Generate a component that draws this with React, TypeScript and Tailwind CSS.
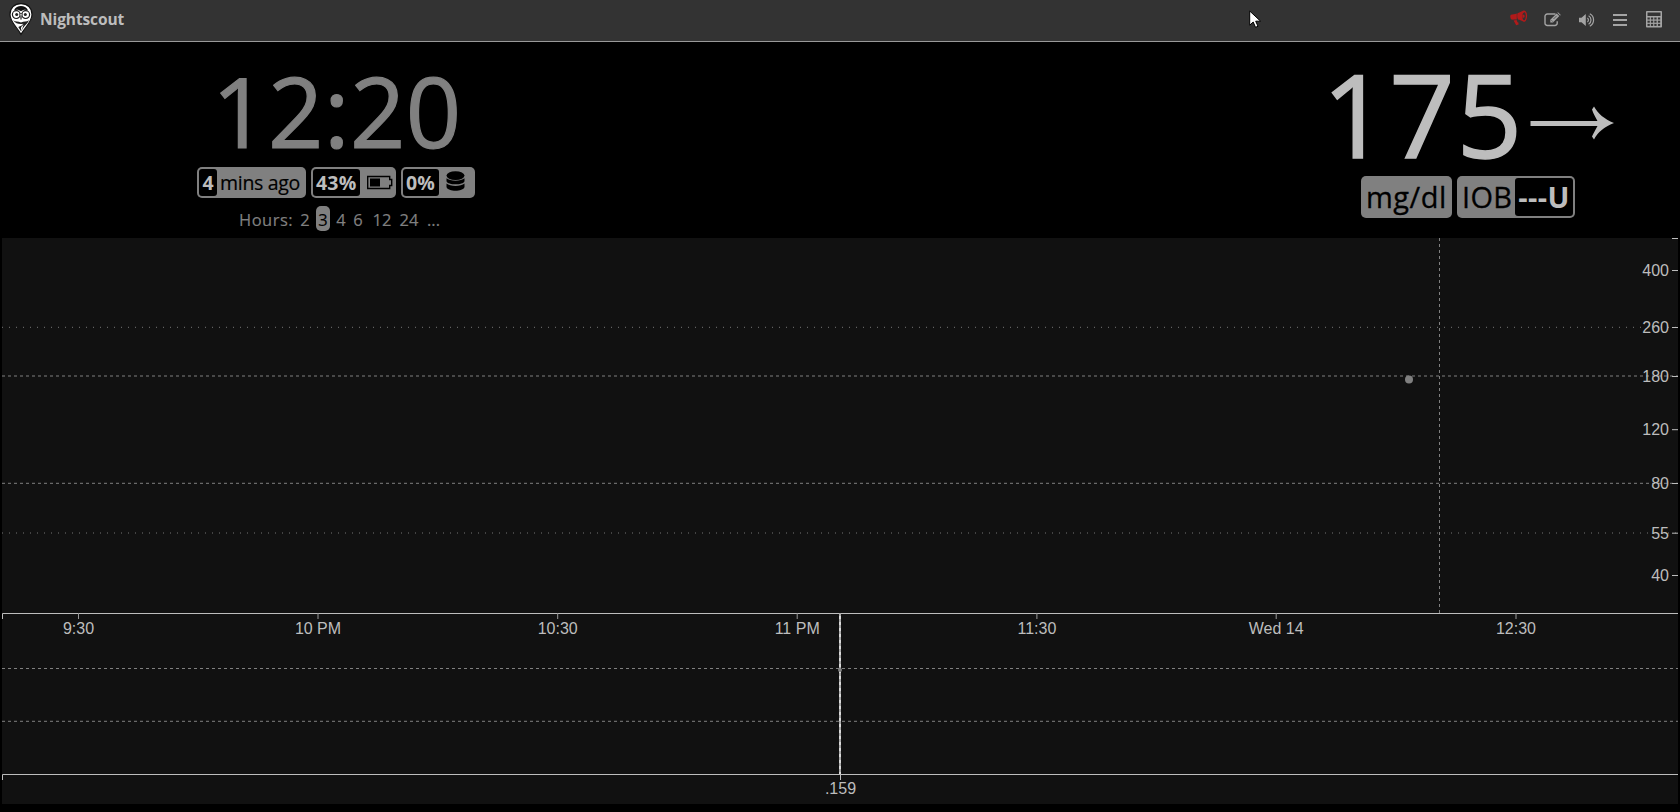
import React from "react";

const WIDTH = 1676;
const HEIGHT = 566;

const yTicks = [
  { label: "400", y: 32.5 },
  { label: "260", y: 89.5 },
  { label: "180", y: 138.5 },
  { label: "120", y: 191.7 },
  { label: "80", y: 245.5 },
  { label: "55", y: 295.2 },
  { label: "40", y: 337.5 },
];

const xTicks = [
  { label: "9:30", x: 76.5 },
  { label: "10 PM", x: 316 },
  { label: "10:30", x: 555.7 },
  { label: "11 PM", x: 795.2 },
  { label: "11:30", x: 1034.9 },
  { label: "Wed 14", x: 1274.2 },
  { label: "12:30", x: 1514 },
];

function Owl() {
  return (
    <svg width="24" height="34" viewBox="0 0 24 34" className="ml-[9px] mt-[2px] shrink-0">
      <path d="M12 1.700C5.400 1.700 1 6 1 12.400c0 7.500 6.300 11.600 11 20 4.700-8.400 11-12.500 11-20C23 6 18.600 1.700 12 1.700Z" fill="#fff" stroke="#111" strokeWidth="1.200" />
      <path d="M5 8.300C6.500 5.300 9 4.100 12 4.100s5.500 1.200 7 4.200c-2.500-1-5.200-.7-7 1-1.800-1.700-4.500-2-7-1Z" fill="#111" />
      <circle cx="7.300" cy="12.600" r="3.900" fill="#fff" stroke="#1b1b1b" strokeWidth="1.200" />
      <circle cx="16.700" cy="12.600" r="3.900" fill="#fff" stroke="#1b1b1b" strokeWidth="1.200" />
      <circle cx="7.700" cy="12.600" r="1.500" fill="#222" />
      <circle cx="16.300" cy="12.600" r="1.500" fill="#222" />
      <path d="M10.800 11.500h2.400L12 17.500Z" fill="#fff" stroke="#222" strokeWidth=".7" />
      <path d="M4 18.300c2.600 1.800 5 .6 8 2.300 3-1.700 5.400-.5 8-2.300-1.400 3.200-4 4.800-5.500 7.200L12 29.300l-2.700-4.400c2.400-.7 3.900-1.700 5-3.200-3.500 1-7.300.3-10.300-3.400Z" fill="#222" />
      <path d="m12 25.200 2.600-2.600-1.300 4.200L12 28.500Z" fill="#fff" />
    </svg>
  );
}

function Megaphone() {
  return (
    <svg width="18" height="16" viewBox="0 0 18 16" fill="#b11a1a">
      <path d="M1 4.700c1.600-.4 3.800-.3 5.800-1.200v6C5 9.300 3 9.900 1.500 9.500.2 9-.2 5.100 1 4.700ZM3.600 10.400l3-.5.9 2.300.9.3.2 2-2.400.8c-.7-1.500-1.700-3.100-2.600-4.900Z" />
      <path fillRule="evenodd" d="M7.500 3.200C10 2.500 12.300.7 13.700.5 16.300.3 17.500 4 17 7.300c-.4 2.900-1.700 5-3.500 4.400-1.700-.6-3.300-2.100-5.500-2.200C7 7.500 7 5 7.500 3.200Zm6.900-1c-1.200.1-2 2-2 4 0 2.100.5 4 1.700 4 1 0 1.700-1.700 1.700-4 0-2.200-.5-4-1.400-4Z" />
      <path d="M12.500 4.800c1.600-.3 2.200.5 2.200 1.400s-.7 1.700-2.200 1.500Z" />
    </svg>
  );
}

function Edit() {
  return (
    <svg width="18" height="15" viewBox="0 0 18 15" fill="none" stroke="#a4a4a4">
      <path d="M11.500 2H3.300A2.300 2.300 0 0 0 1 4.300v6.900a2.300 2.300 0 0 0 2.300 2.300h7.600a2.300 2.300 0 0 0 2.300-2.300V9.200" strokeWidth="1.400" />
      <path d="m6.300 7.800 6.300-6.400 2.700 2.700L9 10.500H6.300ZM13.300.8l.7-.6 2.800 2.700-.7.700Z" fill="#a4a4a4" stroke="none" />
      <path d="m7.500 8.300 1.300 1.300M9.500 7l3.200-3.200" stroke="#333" strokeWidth=".7" />
    </svg>
  );
}

function Volume() {
  return (
    <svg width="17" height="14" viewBox="0 0 17 14" fill="none" stroke="#a4a4a4" strokeWidth="1.200">
      <path d="M1 4.700h2.500L7.800.9v12.200L3.500 9.300H1Z" fill="#a4a4a4" stroke="none" />
      <path d="M9.300 5c1.500.8 1.500 3.200 0 4M10.600 2.800c3.200 1.800 3.200 6.600 0 8.400M11.800.8c5 2.700 5 9.700 0 12.400" />
    </svg>
  );
}

function Calculator() {
  return (
    <svg width="16" height="17" viewBox="0 0 16 17">
      <rect width="16" height="16.500" rx=".8" fill="#a4a4a4" />
      <rect x="1.500" y="1.500" width="13" height="3.500" fill="#333" />
      {[6.5, 9.7, 12.9].map((y) =>
        [1.5, 4.9, 8.3, 11.9].map((x) => <rect key={`${x}-${y}`} x={x} y={y} width="2.300" height="2" fill="#333" />),
      )}
    </svg>
  );
}

function Header() {
  return (
    <header className="flex h-[42px] items-start border-b border-[#999] bg-[#333]">
      <Owl />
      <h1 className="ml-[7px] mt-[8px] text-[15.500px] leading-[22px] font-bold tracking-[-0.100px] text-[#bdbdbd]">Nightscout</h1>
      <nav className="ml-auto mr-[18px] flex h-[38px] items-center">
        <div className="mt-[-2px] mr-[16px]"><Megaphone /></div>
        <div className="mr-[16px]"><Edit /></div>
        <div className="mt-[1px] mr-[18px]"><Volume /></div>
        <div className="mt-[1px] mr-[19px] flex flex-col gap-[3px]">
          <div className="h-[2px] w-[14px] bg-[#a4a4a4]" />
          <div className="h-[2px] w-[14px] bg-[#a4a4a4]" />
          <div className="h-[2px] w-[14px] bg-[#a4a4a4]" />
        </div>
        <Calculator />
      </nav>
    </header>
  );
}

function ClockPanel() {
  return (
    <section className="ml-[197px] w-[280px]">
      <div className="ml-[15px] mt-[18px] h-[107px] text-[97px] leading-[100px] tracking-[0.500px] whitespace-nowrap text-[#808080] [-webkit-text-stroke:1.200px_#808080]">12:20</div>
      <div className="flex gap-[5px] text-[19.500px] leading-[27px] whitespace-nowrap">
        <div className="flex h-[31px] w-[109px] rounded-[5px] bg-[#808080] p-[2px] text-black">
          <b className="w-[18px] rounded-[3px] bg-black text-center text-[#bdbdbd]">4</b>
          <span className="ml-[3px] tracking-[-0.300px] [-webkit-text-stroke:0.200px_#000]">mins ago</span>
        </div>
        <div className="flex h-[31px] w-[85px] rounded-[5px] bg-[#808080] p-[2px] text-black">
          <b className="w-[47px] rounded-[3px] bg-black pl-[3px] tracking-[0.200px] text-[#bdbdbd]">43%</b>
          <svg width="27" height="15" viewBox="0 0 27 15" className="ml-[6px] mt-[6px]">
            <path d="M1.700 1.500h22v3h2v6h-2v3h-22Z" fill="none" stroke="#000" strokeWidth="1.400" />
            <rect x="4" y="3.500" width="10" height="8" />
          </svg>
        </div>
        <div className="flex h-[31px] w-[74px] rounded-[5px] bg-[#808080] p-[2px] text-black">
          <b className="w-[36px] rounded-[3px] bg-black pl-[3px] tracking-[0.200px] text-[#bdbdbd]">0%</b>
          <svg width="19" height="21" viewBox="0 0 19 21" className="ml-[7px] mt-[2px]">
            <ellipse cx="9.500" cy="4.600" rx="9" ry="4.300" />
            <path d="M.5 7.200c3.500 3.300 14.500 3.300 18 0v3c-1.500 4.200-16.500 4.200-18 0ZM.5 12.600c3.500 3.300 14.500 3.300 18 0v3.500c-1.500 5-16.500 5-18 0Z" />
          </svg>
        </div>
      </div>
      <div className="mt-[8px] flex h-[25px] text-[16.500px] leading-[27px] whitespace-nowrap text-[#808080] [-webkit-text-stroke:0.150px]">
        <span className="ml-[42px] w-[58px] tracking-[0.500px]">Hours:</span>
        <span className="ml-[3px] w-[10px] text-center">2</span>
        <span className="ml-[6px] w-[14px] rounded-[5px] bg-[#808080] text-center text-black">3</span>
        <span className="ml-[6px] w-[10px] text-center">4</span>
        <span className="ml-[7px] w-[10px] text-center">6</span>
        <span className="ml-[9px] w-[20px] text-center">12</span>
        <span className="ml-[7px] w-[20px] text-center">24</span>
        <span className="ml-[8px] w-[14px]">...</span>
      </div>
    </section>
  );
}

function GlucosePanel() {
  return (
    <section className="ml-auto mr-[60px] w-[292px]">
      <div className="mt-[12px] flex h-[122px] text-[115px] leading-[120px] tracking-[1.500px] whitespace-nowrap text-[#bdbdbd] [-webkit-text-stroke:1.500px_#bdbdbd]">
        <span className="ml-[-6px] w-[207px]">175</span>
        <svg width="86" height="34" viewBox="0 0 86 34" className="ml-[1px] mt-[52px]">
          <path d="M.5 15h67c-2-4-4-7-5.500-11.500l2-3c4 7 10 12.500 20 16.500-10 4-16 9-20 16.500l-2-3C63.500 27 65.500 24 67.500 20H.5Z" fill="#bdbdbd" />
        </svg>
      </div>
      <div className="ml-[33px] flex gap-[5px] text-[29px] leading-[38px] whitespace-nowrap">
        <div className="h-[42px] w-[91px] rounded-[5px] bg-[#808080] py-[2px] pl-[5px] tracking-[0.500px] text-black [-webkit-text-stroke:0.300px_#000]">mg/dl</div>
        <div className="flex h-[42px] w-[118px] rounded-[5px] bg-[#808080] p-[2px] text-black">
          <span className="w-[56px] pl-[3px] tracking-[0.300px] [-webkit-text-stroke:0.300px_#000]">IOB</span>
          <b className="w-[58px] rounded-[3px] bg-black text-center tracking-[0.400px] text-[#bdbdbd]">---U</b>
        </div>
      </div>
    </section>
  );
}

function Chart() {
  return (
    <svg width={WIDTH} height={HEIGHT} viewBox={`0 0 ${WIDTH} ${HEIGHT}`} className="mx-[2px] block bg-[#111] font-['Liberation_Sans',sans-serif] text-[16px]">
      <g stroke="#808080" strokeDasharray="3 3">
        {[138, 245.3, 430.5, 483.3].map((y) => <line key={y} x2={WIDTH} y1={y} y2={y} />)}
        <line x1="1437.500" x2="1437.500" y1="0" y2="375" />
      </g>
      <g stroke="#777" strokeDasharray="1 6">
        <line x2={WIDTH} y1="89.300" y2="89.300" />
        <line x2={WIDTH} y1="295" y2="295" />
      </g>
      <g stroke="#bdbdbd" fill="none">
        <path d="M.5 381V375.500H1676M.5 542V536.500H1676M838.500 536v6M1670 .5h6" />
        {yTicks.map((t) => <line key={t.label} x1="1670" x2="1676" y1={t.y} y2={t.y} />)}
        {xTicks.map((t) => <line key={t.label} x1={t.x} x2={t.x} y1="375" y2="381" stroke="#999" />)}
      </g>
      <g fill="#bdbdbd">
        {yTicks.map((t) => <text key={t.label} x="1667" y={Math.floor(t.y) + 6} textAnchor="end">{t.label}</text>)}
        {xTicks.map((t) => <text key={t.label} x={t.x} y="396" textAnchor="middle">{t.label}</text>)}
        <text x="838.500" y="556" textAnchor="middle">.159</text>
      </g>
      <circle cx="1407" cy="141.500" r="4" fill="#808080" />
      <line x1="838" x2="838" y1="375" y2="536" stroke="#d8d8d8" strokeWidth="2" />
      <line x1="838" x2="838" y1="375" y2="536" stroke="#aaa" strokeWidth="2" strokeDasharray="3 3" />
      <circle cx="838" cy="432" r="2" fill="#808080" />
    </svg>
  );
}

export default function App() {
  return (
    <div className="relative h-[812px] w-[1680px] overflow-hidden bg-black font-['Open_Sans','Noto_Sans',sans-serif]">
      <Header />
      <main>
        <div className="flex h-[196px]">
          <ClockPanel />
          <GlucosePanel />
        </div>
        <Chart />
      </main>
      <svg width="13" height="19" viewBox="0 0 13 19" className="absolute top-[10px] left-[1249px]">
        <path d="M.7 1v14.200l3.500-3.200 2.300 5.300 2.500-1-2.300-5.100h4.900Z" fill="#fff" stroke="#000" />
      </svg>
    </div>
  );
}
